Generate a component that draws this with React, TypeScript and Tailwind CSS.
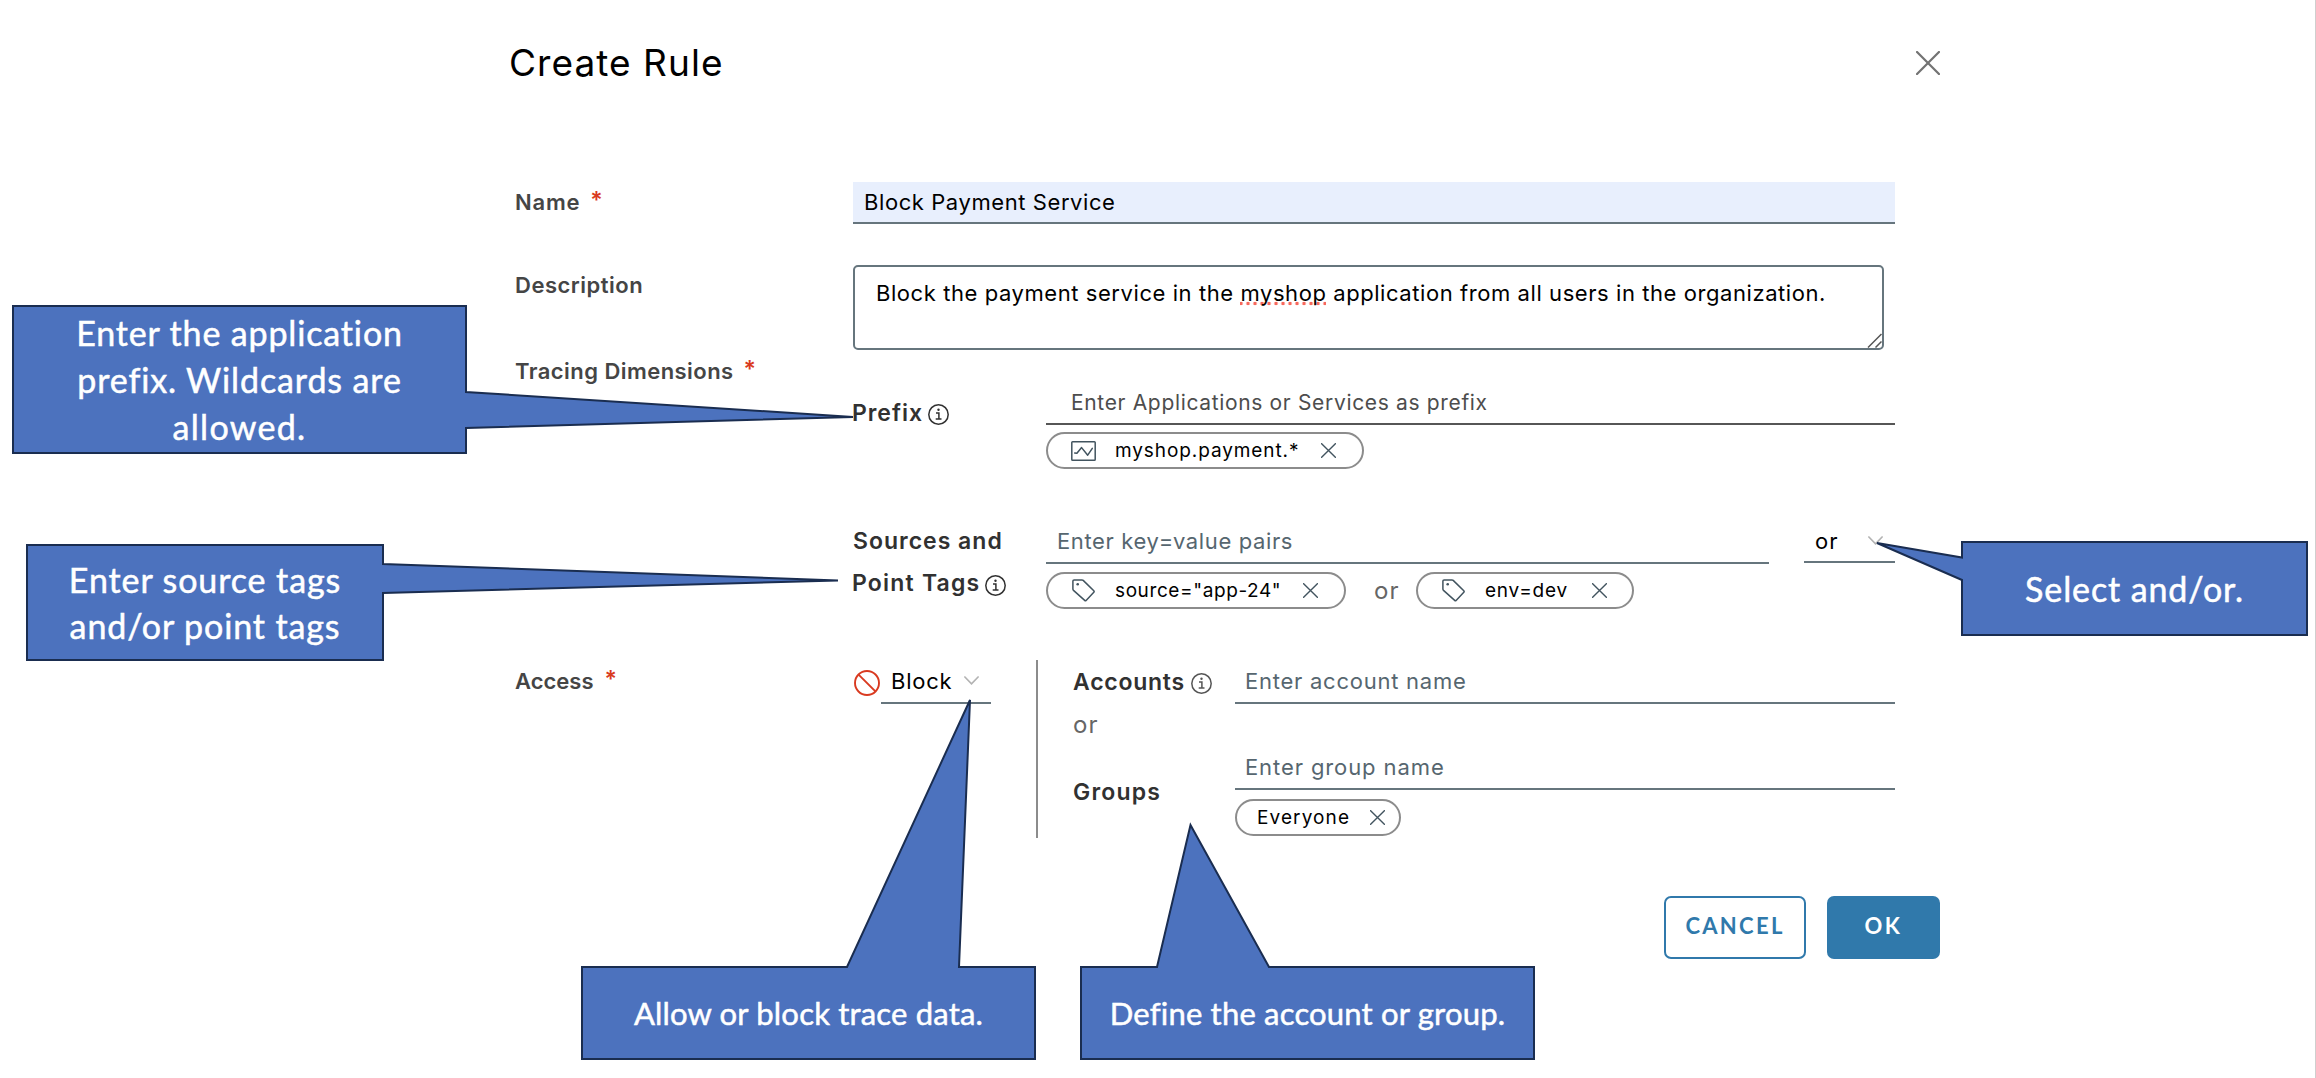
import type { ReactNode } from "react";

function Info({ className = "" }: { className?: string }) {
  return (
    <svg viewBox="0 0 21 21" className={`h-[21px] w-[21px] shrink-0 ${className}`} fill="none" stroke="currentColor" strokeWidth="1.5">
      <circle cx="10.5" cy="10.5" r="9.7" />
      <path d="M8 8.9h2.9v6.2M7.7 15.1h5.8" />
      <circle cx="10.5" cy="5.7" r="1.2" fill="currentColor" stroke="none" />
    </svg>
  );
}

function Cross({ className }: { className: string }) {
  return (
    <svg viewBox="0 0 14 14" className={`shrink-0 ${className}`} fill="none" stroke="currentColor" strokeWidth="1.3" strokeLinecap="round">
      <path d="M.6.6l12.8 12.8M13.4.6L.6 13.4" />
    </svg>
  );
}

function Chevron() {
  return (
    <svg viewBox="0 0 15 9" className="-mt-px h-[9px] w-[15px] shrink-0 text-[#b3b3b3]" fill="none" stroke="currentColor" strokeWidth="1.7" strokeLinecap="round">
      <path d="M.9 1l6.6 6.8L14.1 1" />
    </svg>
  );
}

function ChartIcon() {
  return (
    <svg viewBox="0 0 25 20" className="h-5 w-[25px] shrink-0 text-[#42545f]" fill="none" stroke="currentColor" strokeWidth="1.5" strokeLinejoin="round" strokeLinecap="round">
      <rect x=".8" y=".8" width="23.4" height="18.4" rx=".8" />
      <path d="M3.7 12l2.2.3 4.7-5.7 6.1 7.6 4.6-6.8" />
    </svg>
  );
}

function TagIcon() {
  return (
    <svg viewBox="0 0 23 23" className="h-[23px] w-[23px] shrink-0 text-[#42545f]" fill="none" stroke="currentColor" strokeWidth="1.5" strokeLinejoin="round">
      <path d="M.9 2.1Q.9.9 2.1.9H10q.7 0 1.2.5l10.6 10.4q.7.8 0 1.5l-7.7 8.1q-.7.7-1.4 0L1.5 11.4Q.9 10.800.9 10z" />
      <circle cx="5.7" cy="5.3" r="1.3" fill="currentColor" stroke="none" />
    </svg>
  );
}

function Star() {
  return <span className="relative -top-[2px] text-[23px] font-semibold text-[#d93a20]">*</span>;
}

function Chip({ width, children }: { width: string; children: ReactNode }) {
  return (
    <div className={`flex h-[37px] items-center rounded-full border-2 border-[#8c8c8c] text-[19px] text-black ${width}`}>{children}</div>
  );
}

const label = "flex h-10 w-[338px] shrink-0 items-center font-semibold text-[#454545]";
const sub = "font-semibold text-[23px] text-[#313131]";
const field = "flex items-center border-b-2 border-[#66757d] pb-px text-[#56666f]";

type CalloutProps = {
  box: string;
  size: string;
  outline: string;
  children: ReactNode;
};

function Callout({ box, size, outline, children }: CalloutProps) {
  return (
    <div className={`absolute flex flex-col items-center justify-center font-['Lato',sans-serif] whitespace-nowrap text-white [-webkit-text-stroke:0.5px_white] ${box} ${size}`}>
      <svg className="absolute top-0 left-0 h-full w-full overflow-visible" fill="#4c72be" stroke="#1a2d50" strokeWidth="2">
        <path d={outline} />
      </svg>
      {children}
    </div>
  );
}

export default function App() {
  return (
    <div className="relative h-[1078px] w-[2316px] overflow-hidden border-r border-[#cfcfcf] bg-white font-['Inter',sans-serif] text-[22px] leading-none whitespace-nowrap">
      <header className="ml-[509px] flex h-[127px] w-[1431px] items-center justify-between pb-[2px]">
        <h1 className="text-[37px] tracking-[1.05px] text-black">Create Rule</h1>
        <Cross className="h-6 w-6 text-[#737373]" />
      </header>

      <main className="ml-[515px] w-[1380px] pt-[55px]">
        <div className="flex">
          <div className={label}>
            <span className="mr-[10px] tracking-[0.8px]">Name</span>
            <Star />
          </div>
          <div className="flex h-[42px] grow items-center border-b-2 border-[#66757d] bg-[#e8effd] pb-px pl-[11px] tracking-[0.58px] text-black">
            Block Payment Service
          </div>
        </div>

        <div className="mt-[41px] flex">
          <div className={label}>
            <span className="tracking-[0.5px]">Description</span>
          </div>
          <div className="relative h-[85px] w-[1031px] rounded-[5px] border-2 border-[#66757d] pt-[8px] pl-[21px] leading-[36px] tracking-[0.57px] text-black">
            Block the payment service in the{" "}
            <span className="bg-[radial-gradient(circle,#f7685c_1.5px,transparent_2.1px)] bg-[length:7px_5px] bg-bottom bg-repeat-x">myshop</span>{" "}
            application from all users in the organization.
            <svg viewBox="0 0 15 15" className="absolute right-0 bottom-0 h-[15px] w-[15px]" stroke="#555" strokeWidth="1.5">
              <path d="M1 14.500L14.500 1M8.500 14.500l6-6" />
            </svg>
          </div>
        </div>

        <div className="mt-px flex">
          <div className={label}>
            <span className="mr-[10px] tracking-[0.45px]">Tracing Dimensions</span>
            <Star />
          </div>
          <div className="grow pt-8">
            <div className="flex">
              <div className={`mt-[10px] flex h-10 w-[193px] shrink-0 items-center ${sub}`}>
                <span className="mr-[5px] -ml-px tracking-[0.95px]">Prefix</span>
                <Info className="mt-[3px]" />
              </div>
              <div className="grow">
                <div className="flex h-[42px] items-center border-b-2 border-[#565656] pb-px pl-[25px] text-[21px] tracking-[0.66px] text-[#4d4d4d]">
                  Enter Applications or Services as prefix
                </div>
                <div className="mt-[7px]">
                  <Chip width="w-[318px] pl-[23px]">
                    <ChartIcon />
                    <span className="ml-[19px] w-[206px] tracking-[0.91px]">myshop.payment.*</span>
                    <Cross className="h-[15px] w-[15px] text-[#42545f]" />
                  </Chip>
                </div>
              </div>
            </div>

            <div className="mt-[52px] flex">
              <div className={`-mt-px w-[193px] shrink-0 leading-[42px] ${sub}`}>
                <div className="leading-[42px] tracking-[1px]">Sources and</div>
                <div className="-ml-px flex items-center leading-[42px]">
                  <span className="mr-[5px] tracking-[1.2px]">Point Tags</span>
                  <Info className="mt-[5px]" />
                </div>
              </div>
              <div className="grow">
                <div className="flex justify-between">
                  <div className={`h-[43px] w-[723px] pl-[11px] tracking-[0.63px] ${field}`}>Enter key=value pairs</div>
                  <div className="flex h-[42px] w-[91px] items-center justify-between border-b-2 border-[#66757d] pr-[12px] pl-[11px] text-black">
                    <span className="tracking-[1px]">or</span>
                    <Chevron />
                  </div>
                </div>
                <div className="mt-2 flex items-center">
                  <Chip width="w-[300px] pl-6">
                    <TagIcon />
                    <span className="ml-5 w-[188px] tracking-[0.6px]">source="app-24"</span>
                    <Cross className="h-[15px] w-[15px] text-[#42545f]" />
                  </Chip>
                  <span className="w-[70px] pl-[28px] text-[24px] tracking-[1px] text-[#666]">or</span>
                  <Chip width="w-[218px] pl-6">
                    <TagIcon />
                    <span className="ml-5 w-[107px] tracking-[0.77px]">env=dev</span>
                    <Cross className="h-[15px] w-[15px] text-[#42545f]" />
                  </Chip>
                </div>
              </div>
            </div>
          </div>
        </div>

        <div className="mt-[51px] flex h-[178px]">
          <div className={`mt-px ${label}`}>
            <span className="mr-[11px]">Access</span>
            <Star />
          </div>
          <div className="mt-px flex h-[43px] w-[183px] shrink-0">
            <svg viewBox="0 0 26 26" className="mt-[9px] ml-[1px] h-[26px] w-[26px] text-[#d93a20]" fill="none" stroke="currentColor" strokeWidth="1.9">
              <circle cx="13" cy="13" r="12" />
              <path d="M4.600 4.600l16.800 16.800" />
            </svg>
            <div className="ml-px flex w-[110px] items-center justify-between border-b-2 border-[#66757d] pr-[12px] pb-px pl-[10px] text-black">
              <span className="tracking-[0.75px]">Block</span>
              <Chevron />
            </div>
          </div>
          <div className="flex grow border-l-2 border-[#8c8c8c] pt-px pl-[35px]">
            <div className="w-[162px] shrink-0">
              <div className={`flex h-[42px] items-center ${sub}`}>
                <span className="mr-[6px] tracking-[0.75px]">Accounts</span>
                <Info className="mt-[3px] text-[#555]" />
              </div>
              <div className="flex h-[43px] items-center text-[24px] tracking-[1px] text-[#666]">or</div>
              <div className={`mt-[26px] flex h-10 items-center tracking-[1.2px] ${sub}`}>Groups</div>
            </div>
            <div className="grow">
              <div className={`h-[43px] pl-[10px] tracking-[0.75px] ${field}`}>Enter account name</div>
              <div className={`mt-[43px] h-[43px] pl-[10px] tracking-[0.9px] ${field}`}>Enter group name</div>
              <div className="mt-[9px]">
                <Chip width="w-[166px] pl-5">
                  <span className="w-[113px] tracking-[1.1px]">Everyone</span>
                  <Cross className="h-[15px] w-[15px] text-[#42545f]" />
                </Chip>
              </div>
            </div>
          </div>
        </div>
      </main>

      <footer className="ml-[508px] mt-[58px] flex w-[1432px] justify-end gap-[21px] font-['Lato',sans-serif] font-bold">
        <button className="flex h-[63px] w-[142px] items-center justify-center rounded-[7px] border-2 border-[#3079ab] pb-[4px] tracking-[2.3px] text-[#3079ab]">CANCEL</button>
        <button className="flex h-[63px] w-[113px] items-center justify-center rounded-[7px] bg-[#3079ab] pb-[4px] tracking-[2.6px] text-white">OK</button>
      </footer>

      <Callout box="left-[13px] top-[306px] h-[147px] w-[453px]" size="text-[34px]" outline="M0 0H453V86L840 111L453 122V147H0Z">
        <span className="relative leading-[47px] tracking-[0.85px]">Enter the application</span>
        <span className="relative leading-[47px] tracking-[0.88px]">prefix. Wildcards are</span>
        <span className="relative leading-[47px] tracking-[1.3px]">allowed.</span>
      </Callout>
      <Callout box="left-[27px] top-[545px] h-[115px] w-[356px]" size="text-[34px]" outline="M0 0H356V19L811 35.500L356 48V115H0Z">
        <span className="relative leading-[46px] tracking-[0.9px]">Enter source tags</span>
        <span className="relative leading-[46px] tracking-[0.87px]">and/or point tags</span>
      </Callout>
      <Callout box="left-[1962px] top-[542px] h-[93px] w-[345px]" size="text-[34px]" outline="M0 0H345V93H0V38L-85 1L0 15.500Z">
        <span className="relative tracking-[0.88px]">Select and/or.</span>
      </Callout>
      <Callout box="left-[582px] top-[967px] h-[92px] w-[453px]" size="text-[31px]" outline="M0 0H265L388 -267L377 0H453V92H0Z">
        <span className="relative tracking-[0.19px]">Allow or block trace data.</span>
      </Callout>
      <Callout box="left-[1081px] top-[967px] h-[92px] w-[453px]" size="text-[31px]" outline="M0 0H76L109.500 -142L188 0H453V92H0Z">
        <span className="relative tracking-[0.19px]">Define the account or group.</span>
      </Callout>
    </div>
  );
}
